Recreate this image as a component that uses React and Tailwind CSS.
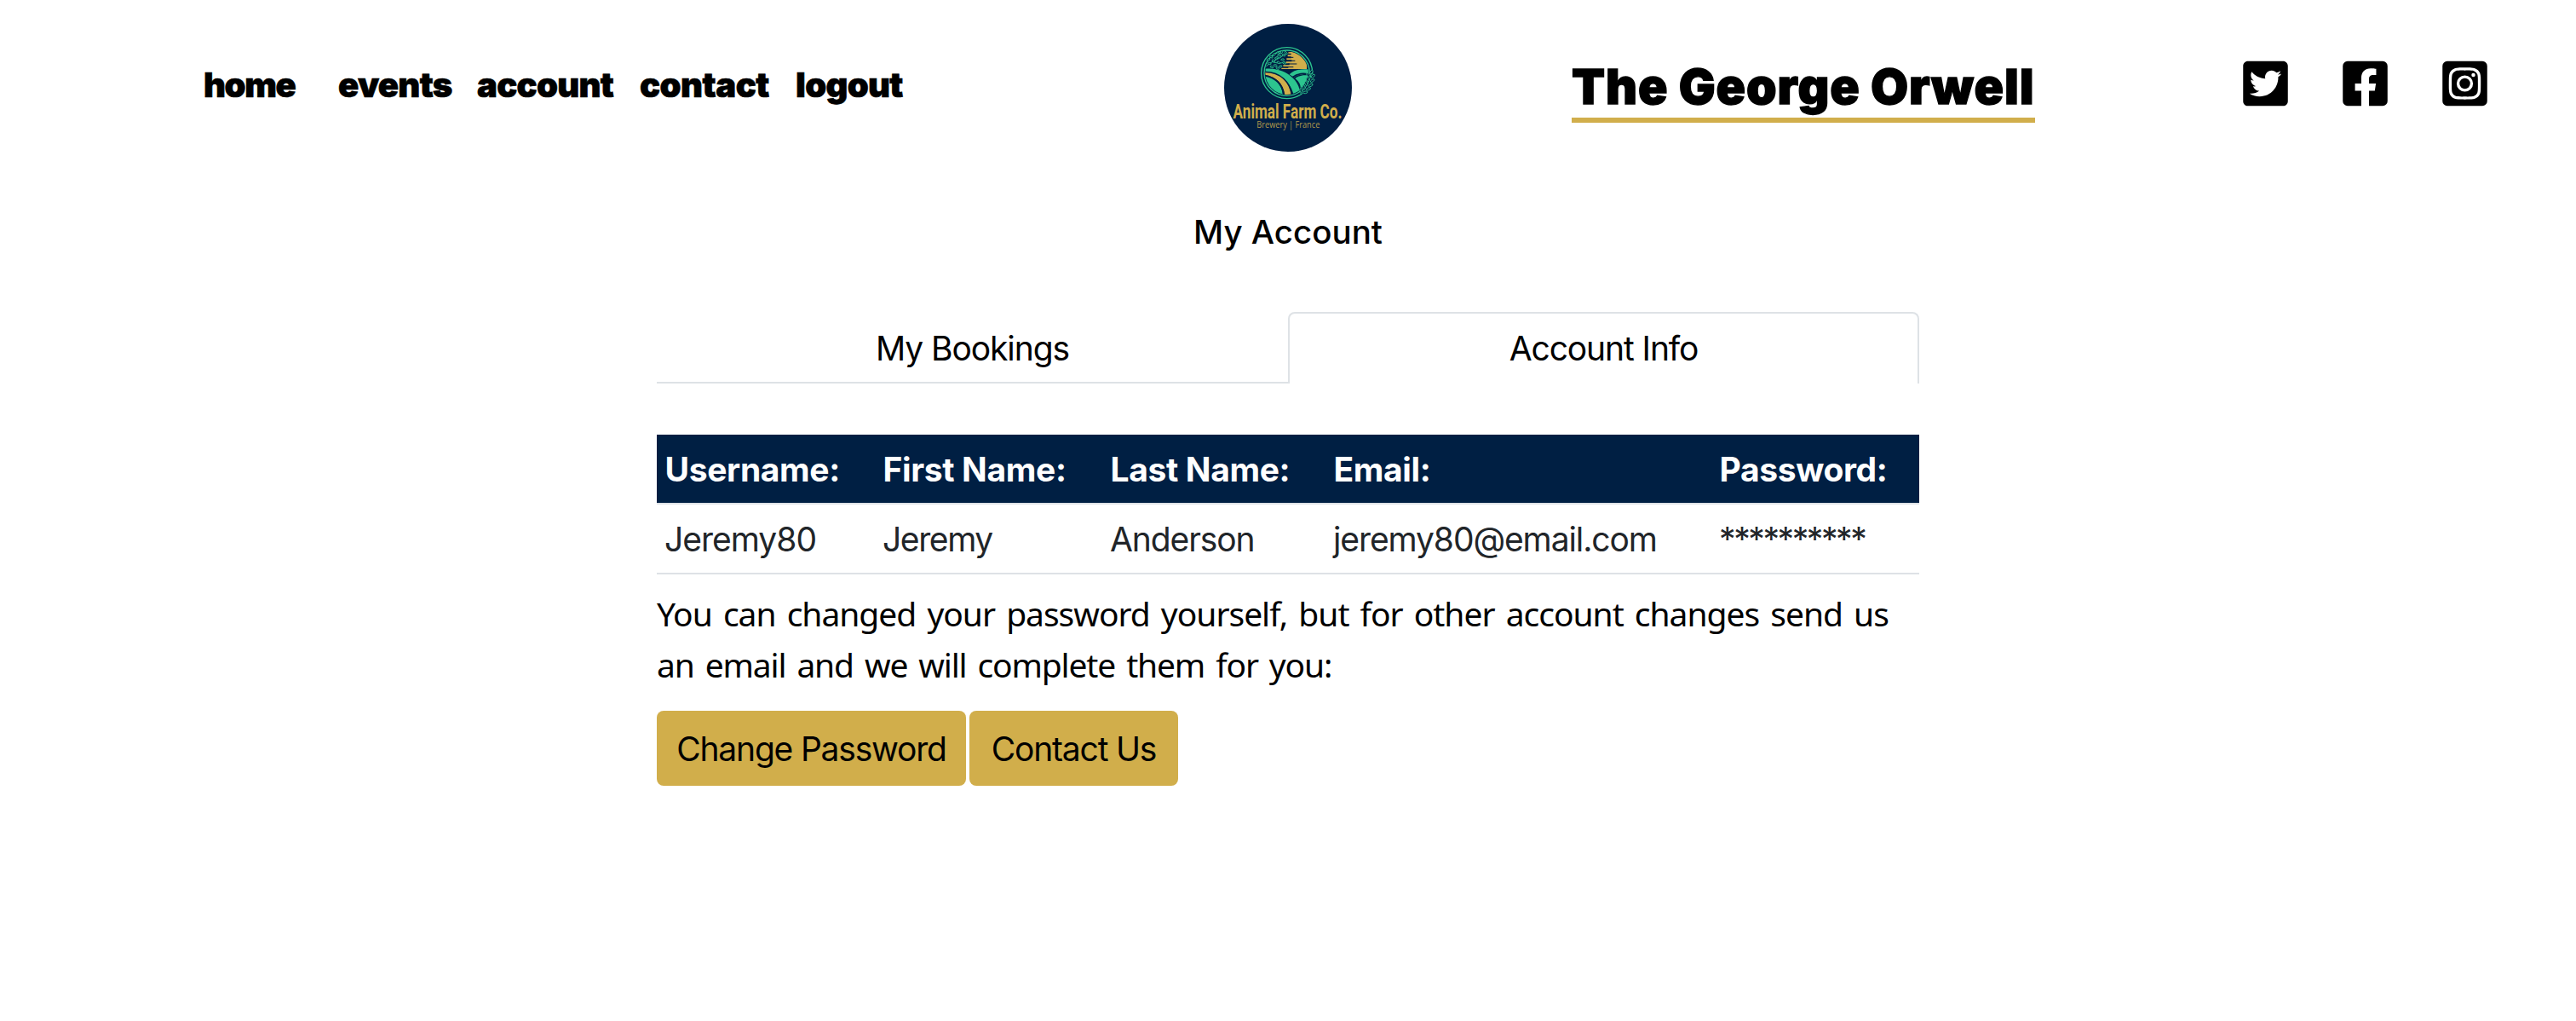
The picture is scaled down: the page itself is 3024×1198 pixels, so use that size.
import React from 'react';
import { FaTwitterSquare, FaFacebookSquare, FaInstagramSquare } from 'react-icons/fa';

const navLinks = [
  { label: 'home', width: 'w-[158px] tracking-[-1.4px]' },
  { label: 'events', width: 'w-[163px]' },
  { label: 'account', width: 'w-[191px]' },
  { label: 'contact', width: 'w-[183px] tracking-[-0.5px]' },
  { label: 'logout', width: 'w-[135px]' },
];

const columns = [
  { title: 'Username:', value: 'Jeremy80', width: 'w-[256px]', tracking: 'tracking-[-1px]' },
  { title: 'First Name:', value: 'Jeremy', width: 'w-[267px]', tracking: 'tracking-[-1.4px]' },
  { title: 'Last Name:', value: 'Anderson', width: 'w-[262px]', tracking: 'tracking-[-1.1px]' },
  { title: 'Email:', value: 'jeremy80@email.com', width: 'w-[453px]', tracking: 'tracking-[-1.1px]' },
  { title: 'Password:', value: '**********', width: 'w-[244px]', tracking: 'tracking-[-2.4px]' },
];

const treeLeaves = [
  [42, 60, -20], [52, 50, 30], [46, 74, 10], [62, 42, -40], [60, 64, 25], [70, 54, -15],
  [76, 38, 40], [82, 50, -35], [88, 34, -60], [96, 44, 20], [78, 70, 30], [92, 60, -10],
  [66, 80, 0], [84, 84, -20], [104, 36, 50], [98, 72, 15], [54, 86, 20], [74, 90, 35],
];

const wheatLeaves = [
  [193, 104, -60], [182, 114, 60], [199, 118, -45], [180, 130, 65], [197, 134, -35], [175, 144, 70],
  [191, 150, -30], [167, 157, 75], [183, 163, -20], [157, 168, 85], [172, 175, -10],
];

function Leaf({ x, y, angle, rx = 8, ry = 4 }) {
  return (
    <ellipse cx={x} cy={y} rx={rx} ry={ry} transform={`rotate(${angle} ${x} ${y})`} fill="#001f43" stroke="#2cc48f" strokeWidth="2.6" />
  );
}

function Logo() {
  return (
    <svg viewBox="0 0 150 150" className="size-[150px] overflow-visible" role="img" aria-label="Animal Farm Co.">
      <defs>
        <clipPath id="scene">
          <circle cx="107" cy="107" r="76" />
        </clipPath>
      </defs>
      <circle cx="75" cy="75" r="75" fill="#001f43" />
      <g transform="translate(38 22) scale(0.3333)">
        <g clipPath="url(#scene)">
          <path d="M112 34 C150 24 182 52 177 93 H88 V89 H112 V84 H94 V79 H116 V73 H104 V67 H124 V61 H106 V55 H122 V49 H110 V43 H122 V38 H112 Z" fill="#d1ae4b" />
          <path d="M100 52 H130 M96 64 H136 M112 75 H142 M102 86 H130" stroke="#001f43" strokeWidth="3" />
          <path d="M116 112 C136 92 168 92 190 95 V112 C165 108 145 114 132 122 Z" fill="#2cc48f" />
          <path d="M136 126 C150 115 170 112 190 117 V160 L156 166 C156 148 150 137 136 126 Z" fill="#2cc48f" />
          <path d="M128 121 C146 108 168 107 190 113" fill="none" stroke="#001f43" strokeWidth="5" />
          <path d="M20 94 C80 82 146 118 153 172 L132 190 C124 140 84 104 20 102 Z" fill="#2cc48f" />
          <path d="M20 104 C78 98 118 136 123 190 L100 190 C98 148 70 116 20 113 Z" fill="#d1ae4b" />
          <path d="M20 104 C84 98 122 142 125 190" fill="none" stroke="#001f43" strokeWidth="5" />
          <path d="M20 116 C66 120 92 148 93 190 H20 Z" fill="#2cc48f" />
          <path d="M20 115 C66 119 94 146 97 190" fill="none" stroke="#001f43" strokeWidth="6" />
        </g>
        <circle cx="107" cy="107" r="90" fill="none" stroke="#2cc48f" strokeWidth="4" />
        <circle cx="107" cy="107" r="80" fill="none" stroke="#2cc48f" strokeWidth="4" />
        <path d="M34 84 C56 62 80 60 108 34 M56 68 C74 72 84 76 100 66 M66 62 C70 48 80 40 88 34" fill="none" stroke="#2cc48f" strokeWidth="3" />
        {treeLeaves.map(([x, y, a]) => <Leaf key={`${x}-${y}`} x={x} y={y} angle={a} rx={6} ry={3} />)}
        <path d="M194 110 C190 134 176 158 158 172" fill="none" stroke="#001f43" strokeWidth="20" />
        <path d="M194 100 C190 134 176 158 154 178" fill="none" stroke="#2cc48f" strokeWidth="3" />
        {wheatLeaves.map(([x, y, a]) => <Leaf key={`${x}-${y}`} x={x} y={y} angle={a} />)}
      </g>
      <text x="10.5" y="111.3" textLength="128" lengthAdjust="spacingAndGlyphs" fill="#d1ae4b" className="font-['Roboto',sans-serif] text-[24px] font-bold">Animal Farm Co.</text>
      <text x="38.3" y="122.4" textLength="74" lengthAdjust="spacingAndGlyphs" fill="#b39a4b" className="font-['Open_Sans',sans-serif] text-[10px]">Brewery | France</text>
    </svg>
  );
}

function Header() {
  return (
    <header className="flex h-[206px] items-start">
      <nav className="ml-[239px] mt-[70px] flex w-[1198px] text-[40px] leading-[60px] font-black tracking-[-0.7px] [-webkit-text-stroke:0.7px_black]">
        {navLinks.map(({ label, width }) => (
          <a key={label} href="#" className={width}>{label}</a>
        ))}
      </nav>
      <div className="mt-7">
        <Logo />
      </div>
      <h1 className="ml-[258px] mt-[66px] w-[544px] whitespace-nowrap border-b-6 border-[#d1ae4b] text-[57px] leading-[72px] font-black tracking-[0.9px] [-webkit-text-stroke:1.3px_black]">
        The George Orwell
      </h1>
      <div className="ml-[244px] mt-[68px] flex gap-[64px] text-[60px]">
        <FaTwitterSquare className="w-[53px]" />
        <FaFacebookSquare className="w-[53px]" />
        <FaInstagramSquare className="w-[53px]" />
      </div>
    </header>
  );
}

function Tabs() {
  return (
    <div className="flex h-[84px] text-center text-[39px] leading-[80px] tracking-[-1.1px]">
      <button className="w-[741px] border-b-2 border-[#dee2e6] pt-[3px]">My Bookings</button>
      <button className="w-[741px] rounded-t-[8px] border-2 border-b-0 border-[#dee2e6] pb-px">Account Info</button>
    </div>
  );
}

function AccountTable() {
  return (
    <table className="mt-[60px] w-full table-fixed border-collapse text-left text-[39px] leading-[78px]">
      <thead className="bg-[#001f43] text-white">
        <tr>
          {columns.map(({ title, width }) => (
            <th key={title} className={`${width} p-0 pt-[2px] pl-[9.5px] font-bold tracking-[-0.35px]`}>{title}</th>
          ))}
        </tr>
      </thead>
      <tbody className="text-[#212529]">
        <tr className="border-y-2 border-[#dee2e6]">
          {columns.map(({ title, value, tracking }) => (
            <td key={title} className={`${tracking} p-0 pt-[2px] pl-[9px]`}>{value}</td>
          ))}
        </tr>
      </tbody>
    </table>
  );
}

export default function App() {
  return (
    <div className="min-h-[1198px] bg-white font-['Inter',sans-serif] text-black">
      <Header />
      <main className="ml-[771px] w-[1482px]">
        <h2 className="mt-[36px] mb-[64px] h-[60px] text-center text-[38.5px] leading-[60px] font-medium">My Account</h2>
        <Tabs />
        <AccountTable />
        <p className="mt-4 font-['Noto_Sans',sans-serif] text-[39px] leading-[60px] tracking-[-1.02px] [word-spacing:4px]">
          You can changed your password yourself, but for other account changes send us
          <br />
          <span className="tracking-[-1.15px]">an email and we will complete them for you:</span>
        </p>
        <div className="mt-6 flex gap-1 text-[39px] leading-[89px] tracking-[-1.2px]">
          <button className="h-[88px] w-[363px] rounded-[8px] bg-[#d1ae4b]">Change Password</button>
          <button className="h-[88px] w-[245px] rounded-[8px] bg-[#d1ae4b]">Contact Us</button>
        </div>
      </main>
    </div>
  );
}
